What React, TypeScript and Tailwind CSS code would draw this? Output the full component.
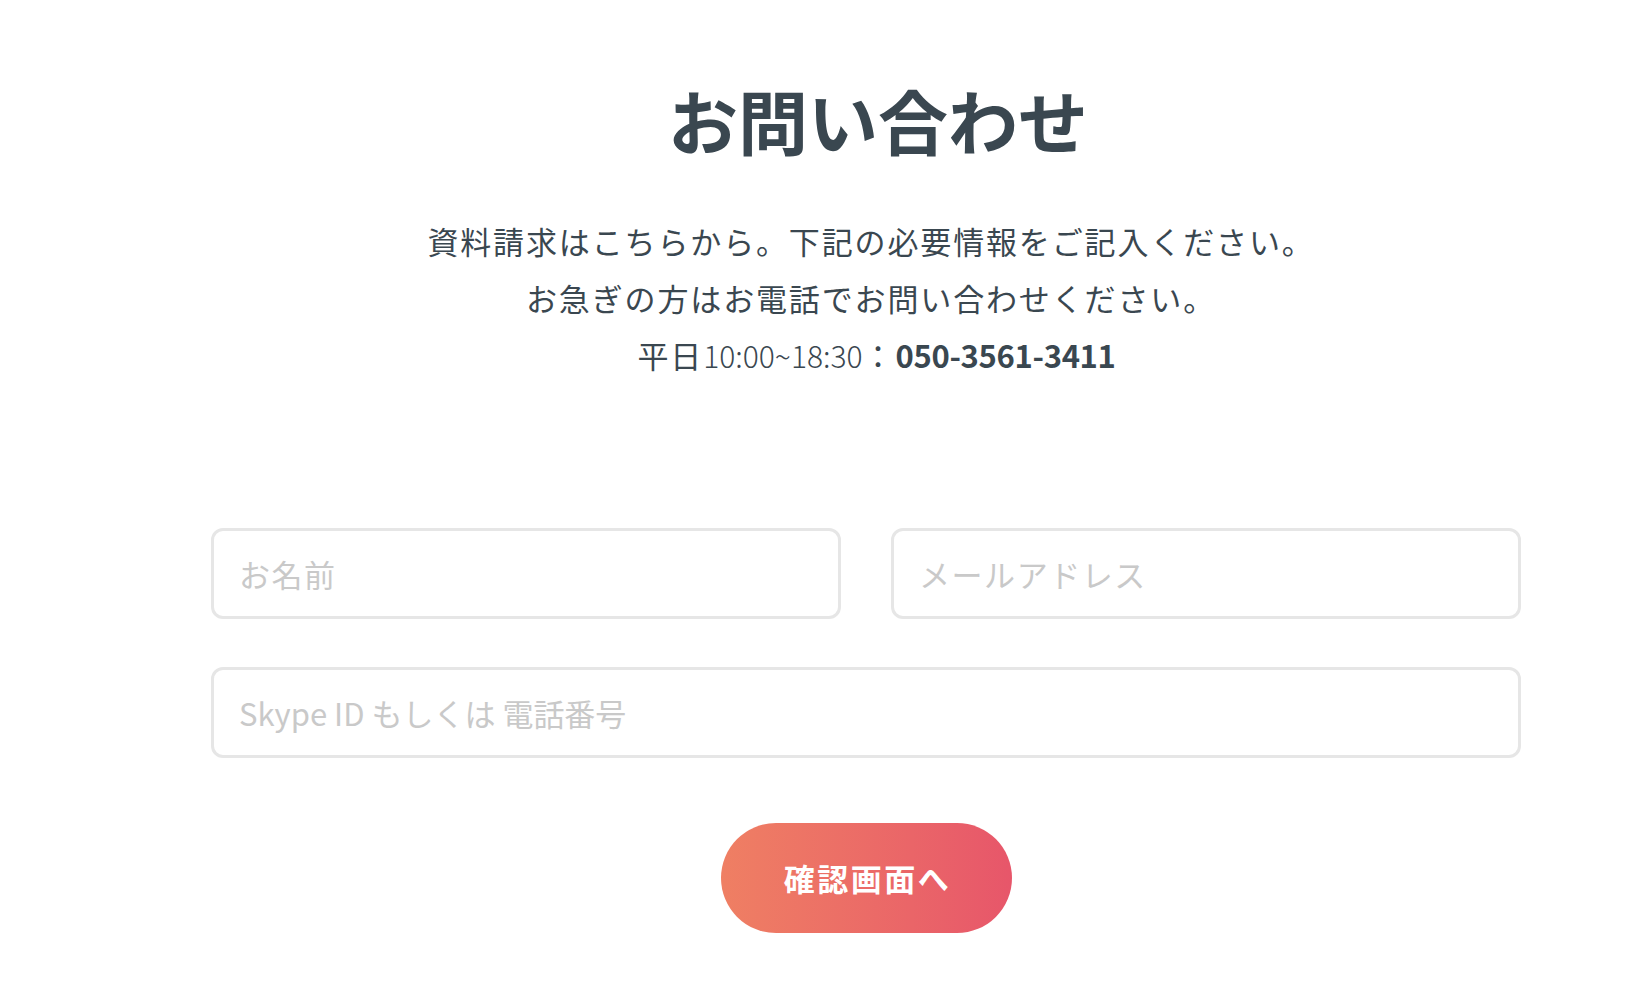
import { useState } from 'react';

const font = { fontFamily: '"Noto Sans CJK JP", "Noto Sans", sans-serif' };

const inputClass =
  'h-[91px] w-full rounded-[12px] border-[3px] border-[#e6e6e6] px-[25px] text-[31px] outline-none placeholder:text-[#c9c9c9]';

export default function App() {
  const [name, setName] = useState('');
  const [email, setEmail] = useState('');
  const [contact, setContact] = useState('');

  return (
    <section className="min-h-screen bg-white text-[#3a4750]" style={font}>
      <div className="pl-[211px] pr-[109px] pt-[70px] pb-[56px]">
        <h1 className="pl-[24px] text-center text-[70px] font-bold leading-[100px]">お問い合わせ</h1>

        <div className="mt-[42px] text-center text-[31px] leading-[57px] tracking-[0.06em]">
          <p className="pl-[10px]">資料請求はこちらから。下記の必要情報をご記入ください。</p>
          <p className="pl-[10px]">お急ぎの方はお電話でお問い合わせください。</p>
          <p className="pl-[21px]">
            平日<span className="font-light text-[30px] tracking-normal">10:00~18:30</span>：
            <span className="font-bold tracking-[-0.01em]">050-3561-3411</span>
          </p>
        </div>

        <form className="mt-[144px] flex flex-col gap-[48px]" onSubmit={(e) => e.preventDefault()}>
          <div className="grid grid-cols-2 gap-[50px]">
            <input
              type="text"
              value={name}
              onChange={(e) => setName(e.target.value)}
              placeholder="お名前"
              className={`${inputClass} tracking-[0.05em]`}
            />
            <input
              type="email"
              value={email}
              onChange={(e) => setEmail(e.target.value)}
              placeholder="メールアドレス"
              className={`${inputClass} tracking-[0.05em]`}
            />
          </div>
          <input
            type="text"
            value={contact}
            onChange={(e) => setContact(e.target.value)}
            placeholder="Skype ID もしくは 電話番号"
            className={`${inputClass} tracking-normal`}
          />
          <div className="mt-[17px] flex justify-center">
            <button
              type="submit"
              className="h-[110px] w-[291px] rounded-full bg-gradient-to-r from-[#ef7f63] to-[#e7566a] pl-[3px] text-[31px] font-bold tracking-[0.08em] text-white"
            >
              確認画面へ
            </button>
          </div>
        </form>
      </div>
    </section>
  );
}
